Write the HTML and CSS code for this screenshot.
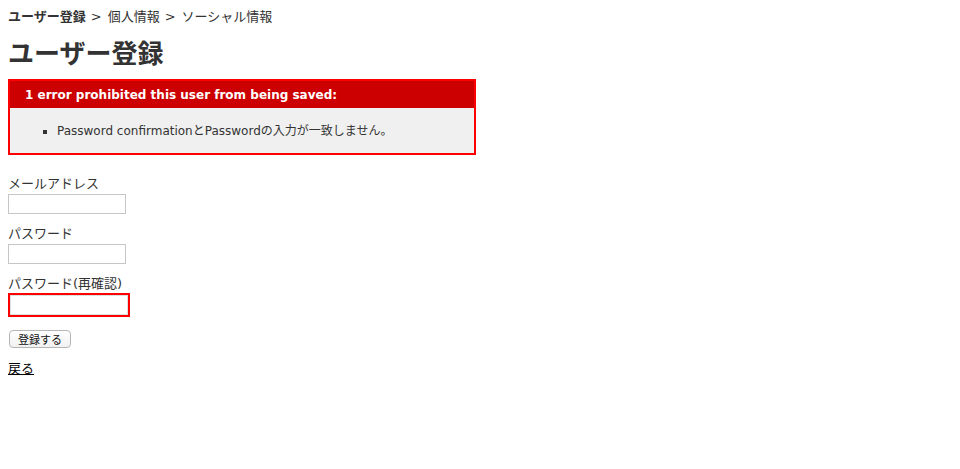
FILE: index.html
```html
<!DOCTYPE html>
<html lang="ja">
<head>
<meta charset="utf-8">
<title>ユーザー登録</title>
<link rel="stylesheet" href="styles.css">
</head>
<body>
<p class="breadcrumb"><b>ユーザー登録</b><span class="sep">&gt;</span>個人情報<span class="sep">&gt;</span>ソーシャル情報</p>
<h1 class="title">ユーザー登録</h1>
<div class="error-explanation">
  <h2 class="error-head">1 error prohibited this user from being saved:</h2>
  <ul class="error-list">
    <li>Password confirmationとPasswordの入力が一致しません。</li>
  </ul>
</div>
<form class="form">
  <div class="field">
    <label class="label">メールアドレス</label>
    <input class="input" type="text">
  </div>
  <div class="field">
    <label class="label">パスワード</label>
    <input class="input" type="password">
  </div>
  <div class="field">
    <label class="label">パスワード(再確認)</label>
    <div class="field-with-errors"><input class="input input-err" type="password"></div>
  </div>
  <div class="actions">
    <button class="btn" type="button">登録する</button>
  </div>
</form>
<a class="back" href="#">戻る</a>
</body>
</html>
```
FILE: styles.css
```css
body {
  margin: 8px;
  color: #333;
  background: #fff;
  font-family: "DejaVu Sans", Verdana, "Noto Sans CJK JP", sans-serif;
  font-size: 13px;
}
.breadcrumb {
  margin: 0;
  line-height: 18px;
  font-size: 13px;
}
.breadcrumb b { font-weight: bold; }
.sep {
  margin: 0 6px 0 5px;
}
.title {
  margin: 12px 0 9px;
  font-size: 26px;
  line-height: 32px;
  font-weight: bold;
}
.error-explanation {
  width: 450px;
  border: 2px solid #f00;
  padding: 7px 7px 0;
  margin-bottom: 20px;
  background: #f0f0f0;
}
.error-head {
  margin: -7px -7px 0;
  padding: 6px 5px 4px 15px;
  font-size: 12px;
  line-height: 17px;
  font-weight: bold;
  background: #c00;
  color: #fff;
}
.error-list {
  margin: 15px 0 13px;
  padding-left: 40px;
}
.error-list li {
  font-size: 12px;
  line-height: 17px;
  list-style: square;
}
.form { margin: 0; }
.field { margin-bottom: 11px; }
.label {
  display: block;
  line-height: 18px;
}
.input {
  display: block;
  margin-top: 1px;
  box-sizing: border-box;
  width: 118px;
  height: 20px;
  border: 1px solid #c6c6c6;
  padding: 0 2px;
  font-size: 13px;
}
.field-with-errors {
  display: table;
  padding: 2px;
  background: #f00;
  margin-top: 0;
}
.input-err { margin-top: 0; border-color: #e0e0e0; }
.actions {
  margin-top: 13px;
  margin-bottom: 12px;
}
.btn {
  display: block;
  margin-left: 1px;
  width: 62px;
  height: 18px;
  padding: 0;
  border: 1px solid #b5b5b5;
  border-radius: 4px;
  background: linear-gradient(#fff, #f1f1f1);
  font-family: "Noto Sans CJK JP", sans-serif;
  font-size: 11px;
  line-height: 15px;
  color: #111;
}
.back {
  display: inline-block;
  color: #000;
  line-height: 18px;
  text-decoration: underline;
}
```
